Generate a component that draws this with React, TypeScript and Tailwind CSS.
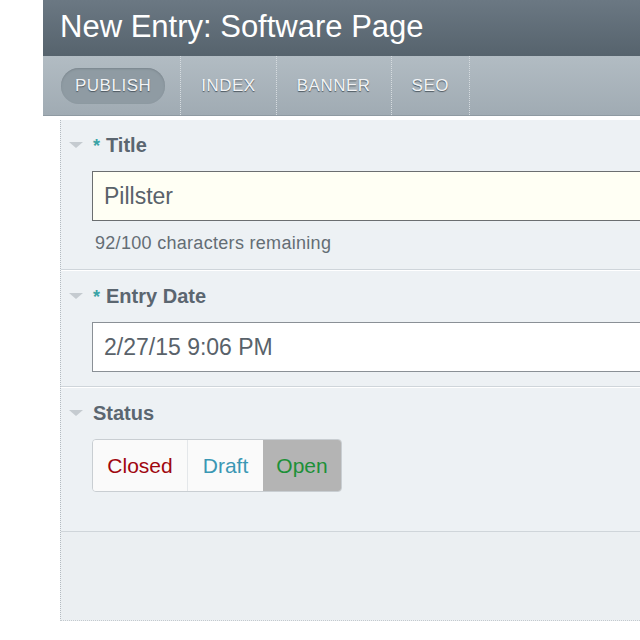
import React from "react";

const tabs = ["PUBLISH", "INDEX", "BANNER", "SEO"];

const Caret = () => (
  <svg width="14" height="7" viewBox="0 0 14 7" className="shrink-0">
    <polygon points="0,0 14,0 7,6" fill="#c5cbd0" />
  </svg>
);

const Label = ({ text, required }: { text: string; required?: boolean }) => (
  <div className="flex items-center h-[24px] pl-[8px]">
    <Caret />
    <div className="ml-[10px] flex items-baseline text-[20px] font-bold text-[#5b6670]">
      {required && <span className="text-[#3aa3a6] mr-[6px] text-[18px]">*</span>}
      {text}
    </div>
  </div>
);

const App = () => {
  return (
    <div className="w-[640px] h-[640px] bg-white overflow-hidden font-['Liberation_Sans',Arial,sans-serif]">
      <div className="ml-[43px]">
        <div className="h-[56px] bg-gradient-to-b from-[#6b7883] to-[#56636d] flex items-center pl-[17px] pb-[3px] text-white text-[31px] leading-none">
          New Entry: Software Page
        </div>
        <div className="h-[60px] bg-gradient-to-b from-[#b2bcc3] to-[#a0abb3] flex items-stretch border-b border-[#8f9aa2]">
          {tabs.map((t, i) => (
            <div
              key={t}
              className={`flex items-center border-r border-dotted border-[#d6dce0] ${i === 0 ? "pl-[18px] pr-[15px]" : "px-[20px]"}`}
            >
              <span
                className={`text-[17px] tracking-[0.5px] text-[#f2f4f6] [text-shadow:0_1px_1px_#4a555e] ${i === 0 ? "h-[36px] px-[14px] flex items-center rounded-full bg-[#8f9ba3] shadow-[inset_0_1px_2px_#7b868e]" : ""}`}
              >
                {t}
              </span>
            </div>
          ))}
        </div>
      </div>

      <div className="ml-[60px] mt-[4px] h-[501px] bg-[#edf1f4] border-l border-dotted border-l-[#b4bbc1] border-b border-b-[#c4cace] flex flex-col">
        <div className="pt-[13px] pb-[16px] border-b border-[#cfd5da] shadow-[0_1px_0_#ffffff]">
          <Label text="Title" required />
          <div className="ml-[31px] mt-[14px] h-[50px] bg-[#fffff4] border border-[#6b6e70] border-r-0 flex items-center pl-[11px] text-[23px] text-[#59626a]">
            Pillster
          </div>
          <div className="ml-[34px] mt-[12px] text-[18px] tracking-[0.3px] leading-[20px] text-[#646d74]">
            92/100 characters remaining
          </div>
        </div>

        <div className="pt-[14px] pb-[14px] border-b border-[#cfd5da] shadow-[0_1px_0_#ffffff]">
          <Label text="Entry Date" required />
          <div className="ml-[31px] mt-[14px] h-[50px] bg-white border border-[#8a9096] border-r-0 flex items-center pl-[11px] text-[23px] text-[#59626a]">
            2/27/15 9:06 PM
          </div>
        </div>

        <div className="pt-[14px] pb-[39px] border-b border-[#cfd5da]">
          <Label text="Status" />
          <div className="ml-[31px] mt-[14px] w-[250px] h-[53px] flex rounded-[4px] border border-[#c9ced2] overflow-hidden text-[21px]">
            <div className="w-[94px] flex items-center justify-center bg-[#fafafa] text-[#a0070f]">Closed</div>
            <div className="w-[76px] flex items-center justify-center bg-[#fafafa] border-l border-[#e4e7ea] text-[#3a97b4]">Draft</div>
            <div className="flex-1 flex items-center justify-center bg-[#b4b4b4] text-[#1d9038]">Open</div>
          </div>
        </div>
        <div className="flex-1 bg-[#ebeff2]" />
      </div>
    </div>
  );
};

export default App;
